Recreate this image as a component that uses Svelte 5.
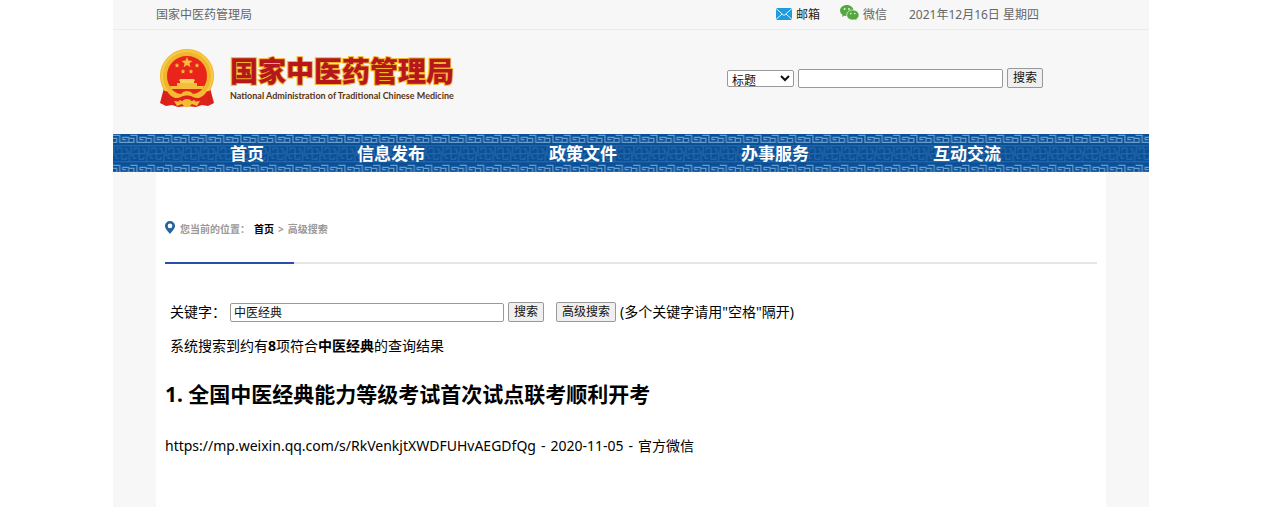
<script lang="ts">
  let searchField = $state('标题');
  let headerQuery = $state('');
  let keyword = $state('中医经典');

  const navItems = ['首页', '信息发布', '政策文件', '办事服务', '互动交流'];

  const results = [
    {
      title: '全国中医经典能力等级考试首次试点联考顺利开考',
      url: 'https://mp.weixin.qq.com/s/RkVenkjtXWDFUHvAEGDfQg',
      date: '2020-11-05',
      source: '官方微信'
    }
  ];

  function handleSubmit(event: Event) {
    event.preventDefault();
  }
</script>

<div class="page">
  <div class="topbar">
    <span>国家中医药管理局</span>
    <div class="topbar-right">
      <a class="mail" href="#mail">
        <svg width="16" height="12" viewBox="0 0 16 12" aria-hidden="true">
          <rect width="16" height="12" rx="1" fill="#1c9be0" />
          <path d="M0 .5 8 7.5 16 .5M0 11.5 6 6M16 11.5 10 6" fill="none" stroke="#e4f3fc" stroke-width="1" />
        </svg>
        邮箱
      </a>
      <a class="wechat" href="#wechat">
        <svg width="19" height="16" viewBox="0 0 19 16" aria-hidden="true">
          <path d="M6.8 0C3 0 0 2.500 0 5.600c0 1.800 1 3.300 2.500 4.300L2 12l2.400-1.300c.8.2 1.600.3 2.400.3 3.800 0 6.800-2.400 6.800-5.400S10.600 0 6.800 0z" fill="#55a83f" />
          <path d="M12.800 5C9.300 5 6.700 7.200 6.700 10s2.600 5 6.100 5c.8 0 1.500-.1 2.200-.3L17 16l-.4-2c1.500-.9 2.400-2.300 2.400-4 0-2.800-2.700-5-6.200-5z" fill="#55a83f" stroke="#f7f7f7" stroke-width=".7" />
          <g fill="#eef6eb">
            <circle cx="4.600" cy="4" r=".9" />
            <circle cx="9" cy="4" r=".9" />
            <circle cx="10.800" cy="8.600" r=".8" />
            <circle cx="14.800" cy="8.600" r=".8" />
          </g>
        </svg>
        微信
      </a>
      <span>2021年12月16日 星期四</span>
    </div>
  </div>

  <header class="header">
    <a class="brand" href="#home">
      <svg class="emblem" width="56" height="60" viewBox="0 0 56 60" aria-hidden="true">
        <path d="M5 40 1 55l6 3 6-1 6 2 9-1 9 1 6-2 6 1 6-3-4-15z" fill="#d9211b" />
        <circle cx="28" cy="28" r="23.500" fill="#e9251b" stroke="#f0b62c" stroke-width="7" />
        <circle cx="28" cy="28" r="25" fill="none" stroke="#f7ca48" stroke-width="2" />
        <g fill="#f6bd3c">
          <path d="m28 9 1.500 3.600 3.900.3-3 2.500 1 3.800-3.400-2.100-3.400 2.100 1-3.800-3-2.500 3.900-.3z" />
          <path id="star" d="m18 15 .7 1.500 1.600.2-1.200 1.100.3 1.700-1.400-.8-1.400.8.3-1.700-1.200-1.100 1.600-.2z" />
          <use href="#star" x="20" />
          <use href="#star" x="6" y="6" />
          <use href="#star" x="14" y="6" />
          <path d="M21 31h14l1 2h-1v2h2v2H19v-2h2v-2h-1z" fill="#f8d15d" />
          <path d="M18 35h20v3H18zM11 38h34l-1 3H12z" />
        </g>
        <path d="M6 43c7 0 12 5 16 4 3-4 9-4 12 0 4 1 9-4 16-4l-2 14-8-1-5-4-5 3h-4l-5-3-5 4-8 1z" fill="#de211a" />
        <path d="M8 43c6-1 10 3 14 3 3-4 9-4 12 0 4 0 8-4 14-3-3 5-8 9-14 6-3-2-9-2-12 0-6 3-11-1-14-6z" fill="#f3bb31" />
        <path d="m15 53 8 1c1-4 9-4 10 0l8-1-3 5-5-2-3 3h-4l-3-3-5 2z" fill="#f3bb31" />
      </svg>
      <span class="brand-text">
        <strong>国家中医药管理局</strong>
        <span>National Administration of Traditional Chinese Medicine</span>
      </span>
    </a>

    <form class="header-search" onsubmit={handleSubmit}>
      <select aria-label="搜索范围" bind:value={searchField}>
        <option>标题</option>
        <option>正文</option>
      </select>
      <input type="text" aria-label="搜索内容" bind:value={headerQuery} />
      <button type="submit">搜索</button>
    </form>
  </header>

  <nav class="nav">
    <svg class="nav-pattern" aria-hidden="true">
      <defs>
        <pattern id="fret" width="52" height="114" patternUnits="userSpaceOnUse" patternTransform="scale(.3333)">
          <rect width="52" height="114" fill="#0a5099" />
          <g id="key" fill="none" stroke="#6a9ecb" stroke-width="3.500">
            <path d="M0 4H20V25H47V10H29V17H39" />
            <path d="M0 25H11V13H0M52 25H47M52 13H49" />
          </g>
          <use href="#key" y="90" />
          <g fill="none" stroke="#2c6cab" stroke-width="3">
            <path d="M26 42V76M9 59H43M26 42H12V50M43 59V45H34M26 76H40V68M9 59V73H18" />
            <path d="M0 35H52M0 83H52M3 35V66M49 52V83" />
          </g>
        </pattern>
      </defs>
      <rect width="100%" height="100%" fill="url(#fret)" />
    </svg>
    <ul>
      {#each navItems as item}
        <li><a href="#nav">{item}</a></li>
      {/each}
    </ul>
  </nav>

  <main class="content">
    <div class="breadcrumb">
      <svg width="10" height="13" viewBox="0 0 10 13" aria-hidden="true">
        <path d="M5 0a5 5 0 0 0-5 5c0 3 3 5 5 8 2-3 5-5 5-8a5 5 0 0 0-5-5zm0 2.600a2.300 2.300 0 1 1 0 4.600 2.300 2.300 0 0 1 0-4.600z" fill="#24639c" />
      </svg>
      <div class="trail">
        <span>您当前的位置：</span>
        <a href="#home">首页</a>
        <span>&gt;</span>
        <span>高级搜索</span>
      </div>
    </div>

    <form class="keyword-search" onsubmit={handleSubmit}>
      <label for="keyword">关键字：</label>
      <input id="keyword" type="text" bind:value={keyword} />
      <button type="submit">搜索</button>
      <button class="advanced" type="button">高级搜索</button>
      <span>(多个关键字请用"空格"隔开)</span>
    </form>

    <p class="summary">系统搜索到约有<b>8</b>项符合<b>中医经典</b>的查询结果</p>

    {#each results as result, i}
      <article>
        <h2>{i + 1}. {result.title}</h2>
        <p class="meta">
          <span>{result.url}</span>
          <span>-</span>
          <span>{result.date}</span>
          <span>-</span>
          <span>{result.source}</span>
        </p>
      </article>
    {/each}
  </main>
</div>

<style>
  :global(body) {
    padding-right: 7px;
    background: #fff;
    color: #000;
    font-family: "Noto Sans", "Noto Sans CJK SC", sans-serif;
    font-size: 14px;
    line-height: 20px;
  }

  a {
    color: inherit;
    text-decoration: none;
  }

  .page {
    box-sizing: border-box;
    display: flex;
    flex-direction: column;
    max-width: 1036px;
    min-height: 100vh;
    margin: 0 auto;
    background: #f7f7f7;
  }

  .topbar {
    display: flex;
    justify-content: space-between;
    align-items: center;
    height: 29px;
    padding: 0 110px 0 43px;
    border-bottom: 1px solid #ebebeb;
    color: #666;
    font-size: 12px;
  }

  .topbar-right,
  .topbar-right a {
    display: flex;
    align-items: center;
  }

  .topbar-right a {
    gap: 4px;
  }

  .topbar-right .mail {
    margin-right: 20px;
    color: #222;
  }

  .mail svg {
    margin-bottom: 2px;
  }

  .topbar-right .wechat {
    margin-right: 22px;
  }

  .wechat svg {
    margin-bottom: 4px;
  }

  .header {
    display: flex;
    justify-content: space-between;
    height: 104px;
    padding: 0 106px 0 46px;
  }

  .brand {
    display: flex;
    align-items: flex-start;
    gap: 15px;
    padding-top: 18px;
  }

  .brand-text {
    display: flex;
    flex-direction: column;
    gap: 2px;
    padding-top: 5px;
    color: #5a3413;
    font-family: Lato, sans-serif;
    font-size: 9px;
    font-weight: 700;
    line-height: 14px;
  }

  .brand-text strong {
    color: #b5171d;
    font-family: "Noto Sans CJK SC", sans-serif;
    font-size: 28px;
    font-weight: 900;
    line-height: 34px;
    paint-order: stroke;
    -webkit-text-stroke: 2px #f5b42a;
  }

  .header-search {
    display: flex;
    align-items: center;
    gap: 4px;
    height: 96px;
  }

  input,
  select,
  button {
    box-sizing: border-box;
    border: 1px solid #999;
    border-radius: 2px;
    background: #fff;
    color: #111;
    font-family: inherit;
    font-size: 12px;
  }

  input {
    height: 19px;
    padding: 0 3px;
  }

  button {
    height: 20px;
    padding: 0 5px;
    background: #efefef;
    line-height: 18px;
  }

  .header-search select {
    width: 67px;
    height: 17px;
    padding: 0;
    line-height: 14px;
  }

  .header-search input {
    width: 205px;
  }

  .nav {
    position: relative;
    height: 38px;
  }

  .nav-pattern {
    position: absolute;
    inset: 0;
    width: 100%;
    height: 100%;
  }

  .nav ul {
    position: relative;
    display: flex;
    margin: 0;
    padding: 0 86px;
    list-style: none;
  }

  .nav li {
    flex: 2;
    color: #fff;
    font-size: 17px;
    font-weight: 700;
    line-height: 40px;
    text-align: center;
  }

  .nav li:first-child {
    flex: 1;
  }

  .content {
    flex: 1;
    margin: 0 43px;
    padding: 0 9px;
    background: #fff;
  }

  .breadcrumb {
    box-sizing: border-box;
    display: flex;
    align-items: center;
    gap: 5px;
    height: 92px;
    padding-top: 24px;
    border-bottom: 2px solid;
    border-image: linear-gradient(to right, #2850a8 130px, #e6e6e6 130px) 2;
    color: #999;
    font-size: 10px;
    font-weight: 700;
  }

  .breadcrumb svg {
    margin-bottom: 4px;
  }

  .trail {
    display: flex;
    gap: 4px;
  }

  .trail a {
    color: #000;
  }

  .keyword-search {
    display: flex;
    align-items: center;
    gap: 4px;
    margin-top: 38px;
    padding-left: 5px;
  }

  .keyword-search input {
    width: 274px;
  }

  .keyword-search .advanced {
    margin-left: 8px;
  }

  .summary {
    margin: 14px 0 23px;
    padding-left: 5px;
  }

  h2 {
    margin: 0 0 27px;
    font-size: 21px;
    line-height: 30px;
  }

  .meta {
    display: flex;
    flex-wrap: wrap;
    gap: 5px;
    margin: 0;
  }
</style>
